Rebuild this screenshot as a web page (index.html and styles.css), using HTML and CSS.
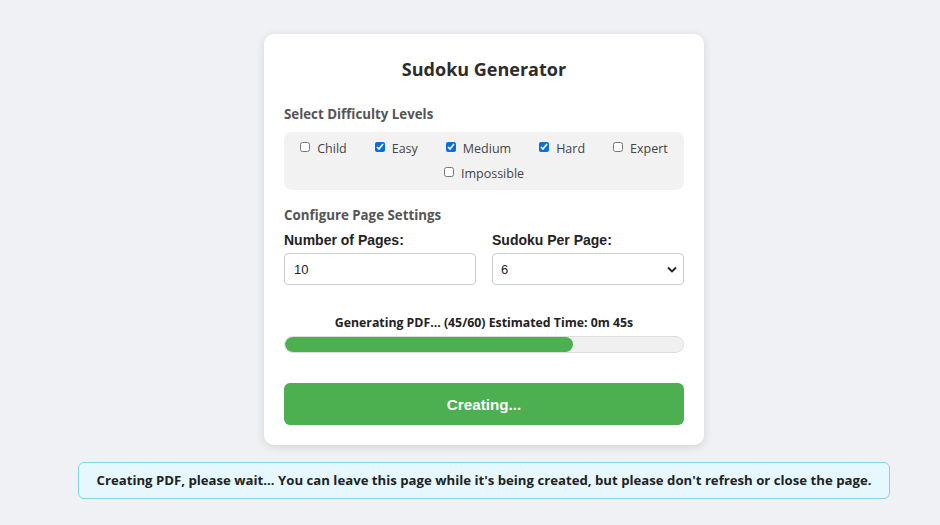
FILE: index.html
```html
<!DOCTYPE html>
<html>
<head>
<meta charset="utf-8">
<link rel="stylesheet" href="styles.css">
</head>
<body>
<main class="page">
  <section class="card">
    <h1 class="title">Sudoku Generator</h1>
    <h2 class="section-title">Select Difficulty Levels</h2>
    <div class="levels">
      <label class="level"><input type="checkbox"> Child</label>
      <label class="level"><input type="checkbox" checked> Easy</label>
      <label class="level"><input type="checkbox" checked> Medium</label>
      <label class="level"><input type="checkbox" checked> Hard</label>
      <label class="level"><input type="checkbox"> Expert</label>
      <label class="level"><input type="checkbox"> Impossible</label>
    </div>
    <h2 class="section-title section-gap">Configure Page Settings</h2>
    <div class="fields">
      <div class="field">
        <label class="field-label">Number of Pages:</label>
        <input class="control" type="text" value="10">
      </div>
      <div class="field">
        <label class="field-label">Sudoku Per Page:</label>
        <select class="control select"><option>6</option></select>
      </div>
    </div>
    <div class="progress-text">Generating PDF... (45/60) Estimated Time: 0m 45s</div>
    <div class="progress"><div class="progress-fill" style="width:72.3%"></div></div>
    <button class="create">Creating...</button>
  </section>
  <div class="notice">Creating PDF, please wait... You can leave this page while it's being created, but please don't refresh or close the page.</div>
</main>
</body>
</html>
```
FILE: styles.css
```css
html, body {
  margin: 0;
  padding: 0;
  background: #f0f1f4;
  font-family: "Open Sans", "Noto Sans", sans-serif;
  color: #333;
}
.page {
  display: flex;
  flex-direction: column;
  align-items: center;
  padding-top: 34px;
  padding-left: 28px;
}
.card {
  width: 400px;
  background: #fff;
  border-radius: 10px;
  box-shadow: 0 2px 10px rgba(0,0,0,0.12);
  padding: 20px 20px 20px;
}
.title {
  margin: 1px 0 0;
  height: 28px;
  line-height: 28px;
  text-align: center;
  font-size: 18px;
  font-weight: 700;
  color: #2c2c2c;
}
.section-title {
  margin: 22px 0 0;
  font-size: 13.3px;
  font-weight: 700;
  color: #555;
  line-height: 18px;
}
.section-gap { margin-top: 16px; }
.levels {
  margin-top: 9px;
  background: #f2f2f2;
  border-radius: 8px;
  display: flex;
  flex-wrap: wrap;
  justify-content: center;
  padding: 7px 10px 7px;
  column-gap: 28px;
  row-gap: 6px;
}
.level {
  display: flex;
  align-items: center;
  font-size: 12.5px;
  color: #444;
  line-height: 19px;
  gap: 7px;
}
.level input {
  margin: 0;
  width: 10px;
  height: 10px;
  accent-color: #0a6fde;
  position: relative;
  top: -2px;
}
.fields {
  margin-top: 8px;
  display: flex;
  gap: 16px;
}
.field {
  flex: 1;
  display: flex;
  flex-direction: column;
}
.field-label {
  font-family: "Liberation Sans", Arial, sans-serif;
  font-size: 14px;
  font-weight: 700;
  color: #222;
  line-height: 17px;
  margin-bottom: 4px;
}
.control {
  box-sizing: border-box;
  height: 32px;
  width: 100%;
  border: 1px solid #ccc;
  border-radius: 4px;
  padding: 0 9px;
  font-family: "Liberation Sans", Arial, sans-serif;
  font-size: 13px;
  color: #222;
  background: #fff;
}
.select {
  padding-left: 8px;
  appearance: none;
  background-image: url("data:image/svg+xml;utf8,<svg xmlns='http://www.w3.org/2000/svg' width='10' height='7' viewBox='0 0 10 7'><path d='M1 1.5l4 4 4-4' fill='none' stroke='%23222' stroke-width='1.8'/></svg>");
  background-repeat: no-repeat;
  background-position: right 6px center;
}
.progress-text {
  margin-top: 30px;
  text-align: center;
  font-size: 12.3px;
  font-weight: 700;
  color: #222;
  line-height: 16px;
}
.progress {
  margin-top: 5px;
  height: 17px;
  box-sizing: border-box;
  border: 1px solid #ddd;
  background: #f0f0f0;
  border-radius: 9px;
  overflow: hidden;
}
.progress-fill {
  height: 100%;
  background: #4caf50;
  border-radius: 9px;
}
.create {
  display: block;
  margin-top: 30px;
  width: 100%;
  height: 42px;
  border: none;
  border-radius: 6px;
  background: #4caf50;
  color: #fff;
  font-family: "Liberation Sans", Arial, sans-serif;
  font-size: 15.2px;
  font-weight: 700;
}
.notice {
  margin-top: 17px;
  width: 812px;
  box-sizing: border-box;
  height: 37px;
  line-height: 35px;
  background: #e6f8fd;
  border: 1px solid #7fd6e2;
  border-radius: 6px;
  text-align: center;
  font-size: 13.2px;
  font-weight: 700;
  color: #222;
}
```
